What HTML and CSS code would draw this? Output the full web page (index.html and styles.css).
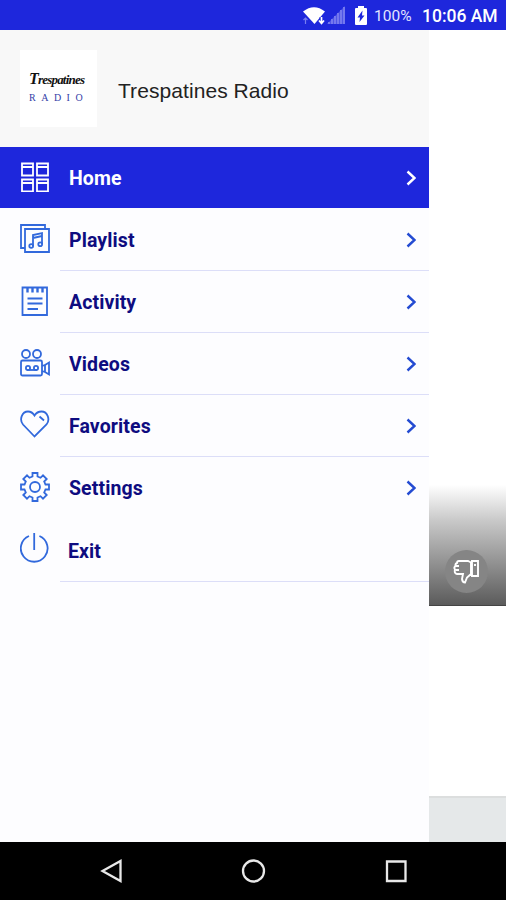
FILE: index.html
```html
<!DOCTYPE html>
<html lang="en">
<head>
<meta charset="utf-8">
<title>Trespatines Radio</title>
<link rel="stylesheet" href="styles.css">
</head>
<body>
<div class="phone">
  <header class="status">
    <svg class="wifi" width="24" height="20" viewBox="0 0 24 20"><path d="M0 5.500Q11 -3 22 5.500L11.500 18Z" fill="#fff"/><path d="M18.500 11v7M16 15l2.500 3 2.500-3" fill="none" stroke="#1e27dc" stroke-width="4"/><path d="M18.500 11v6M16 14.500l2.500 3 2.500-3" fill="none" stroke="#fff" stroke-width="1.700"/><path d="M2.500 18v-6M.5 14l2-2 2 2" fill="none" stroke="#777df0" stroke-width="1.200"/></svg>
    <svg class="signal" width="19" height="18" viewBox="0 0 19 18"><path d="M0 18L18 0v18z" fill="#4f55e6"/><path d="M1 18v-2h2v2zM4 18v-5h2v5zM7 18v-8h2v8zM10 18V7h2v11zM13 18V4h2v14zM16 18V1h2v17z" fill="#7478ee"/></svg>
    <svg class="battery" width="12" height="19" viewBox="0 0 12 19"><path d="M3 0h6v2h2q1 0 1 1v15q0 1-1 1H1q-1 0-1-1V3q0-1 1-1h2z" fill="#fff"/><path d="M7.500 4.500L2.500 11.500H5L4.500 16 9.500 9.500H7z" fill="#1e27dc"/></svg>
    <span class="percent">100%</span>
    <span class="time">10:06 AM</span>
  </header>
  <main class="content">
    <nav class="drawer">
      <div class="profile">
        <div class="logo"><span class="script"><span class="initial">T</span>respatines</span><span class="radio">RADIO</span></div>
        <h1 class="name">Trespatines Radio</h1>
      </div>
      <div class="item active">
        <svg class="icon" viewBox="0 0 30 30"><path d="M2 1.500h11v12H2zM17 1.500h11v12H17zM2 17.500h11v12H2zM17 17.500h11v12H17zM2 5h11M17 5h11M2 21h11M17 21h11"/></svg>
        <div class="row"><span>Home</span><svg class="chevron" viewBox="0 0 10 16"><path d="M1.500 1.500L8.500 8l-7 6.500"/></svg></div>
      </div>
      <div class="item">
        <svg class="icon" viewBox="0 0 30 30"><path d="M5 5h24v23H5zM5 24H1V1h24v4"/><path d="M13 22V11l9-2v11M13 14l9-2"/><circle cx="11.200" cy="22" r="1.900"/><circle cx="20.200" cy="20.200" r="1.900"/></svg>
        <div class="row"><span>Playlist</span><svg class="chevron" viewBox="0 0 10 16"><path d="M1.500 1.500L8.500 8l-7 6.500"/></svg></div>
      </div>
      <div class="item">
        <svg class="icon" viewBox="0 0 30 30"><path d="M2.500 1.500h24.500v27.500H2.500zM7.500 12.500h15M7.500 17.500h15M7.500 23h10.500"/><path d="M7.500 1v5.500M12.500 1v5.500M17.500 1v5.500M22.500 1v5.500" stroke-width="2.400"/></svg>
        <div class="row"><span>Activity</span><svg class="chevron" viewBox="0 0 10 16"><path d="M1.500 1.500L8.500 8l-7 6.500"/></svg></div>
      </div>
      <div class="item">
        <svg class="icon" viewBox="0 0 30 30"><circle cx="6" cy="6" r="4"/><circle cx="17" cy="6" r="4"/><rect x="1" y="12.500" width="21" height="15" rx="1.500"/><path d="M22 18l3-1v7l-3-1M25 17l4-2.500v12L25 24"/><circle cx="8" cy="20" r="2.100"/><circle cx="16" cy="20" r="2.100"/><path d="M7 22h10"/></svg>
        <div class="row"><span>Videos</span><svg class="chevron" viewBox="0 0 10 16"><path d="M1.500 1.500L8.500 8l-7 6.500"/></svg></div>
      </div>
      <div class="item">
        <svg class="icon" viewBox="0 0 30 30"><path d="M14.500 26.500L3 14.500C-1 9.500 2 1.500 8 1.500q4 0 6.500 4Q17 1.500 21.500 1.500c6 0 9 8 5 13zM19.500 6.500l4.500 4"/></svg>
        <div class="row"><span>Favorites</span><svg class="chevron" viewBox="0 0 10 16"><path d="M1.500 1.500L8.500 8l-7 6.500"/></svg></div>
      </div>
      <div class="item plain">
        <svg class="icon" viewBox="0 0 30 30"><path d="M12.500 1h5v3.500l3 1.300L23 3.300 26.700 7l-2.500 2.500 1.300 3H29v5h-3.500l-1.300 3 2.500 2.500L23 26.700l-2.500-2.500-3 1.300V29h-5v-3.500l-3-1.300L7 26.700 3.300 23l2.500-2.500-1.300-3H1v-5h3.500l1.300-3L3.300 7 7 3.300l2.500 2.500 3-1.300z"/><circle cx="15" cy="15" r="5"/></svg>
        <div class="row"><span>Settings</span><svg class="chevron" viewBox="0 0 10 16"><path d="M1.500 1.500L8.500 8l-7 6.500"/></svg></div>
      </div>
      <div class="item last">
        <svg class="icon" viewBox="0 0 30 30"><path d="M9 3A13.400 13.400 0 1 0 19.400 3M14.200 0v17"/></svg>
        <div class="row"><span>Exit</span></div>
      </div>
    </nav>
    <section class="player">
      <div class="art">
        <div class="dislike"><svg width="27" height="27" viewBox="0 0 27 27"><path d="M19 3h6v15h-6zM18 4.500L15 3H6Q4 3 4 5q-2 .5-1.500 3-2 1.500-.5 3.500-1 4 2 4.500h6l-1 5q.5 3.500 3 3.500l2-5 4-3.500z"/><path d="M2.500 8H6M2.500 12H6M22 6v2"/></svg></div>
      </div>
      <div class="footer"></div>
    </section>
  </main>
  <footer class="navbar">
    <svg width="506" height="58" viewBox="0 0 506 58"><path d="M102.500 29L120.500 19v20z"/><circle cx="253.500" cy="29" r="10.500"/><path d="M387 19.500h18.500V39H387z"/></svg>
  </footer>
</div>
</body>
</html>
```

FILE: styles.css
```css
* { box-sizing: border-box; }
body { margin: 0; background: #fff; font-family: Roboto, sans-serif; }
.phone { width: 506px; height: 900px; display: flex; flex-direction: column; overflow: hidden; }
svg { display: block; flex: none; }
.status { height: 30px; flex: none; background: #1e27dc; color: #fff; display: flex; align-items: flex-start; padding: 6px 0 0 303px; white-space: nowrap; }
.battery { margin-left: 9px; }
.percent { width: 48px; margin-left: 7px; font-size: 15.500px; line-height: 20px; color: #e3e4ff; }
.time { font-size: 17.500px; line-height: 20px; font-weight: 500; }
.content { height: 812px; flex: none; display: flex; }
.drawer { width: 429px; flex: none; background: #fdfdff; color: #0e0c80; }
.profile { height: 117px; background: #f8f8f8; display: flex; align-items: center; padding: 0 0 0 20px; gap: 21px; }
.logo { width: 77px; height: 77px; background: #fff; display: flex; flex-direction: column; padding: 20px 0 0 9px; font-family: "Liberation Serif", serif; }
.script { font-size: 13px; line-height: 20px; font-style: italic; font-weight: 700; letter-spacing: -.8px; color: #111; }
.initial { font-size: 16px; line-height: 1; }
.radio { font-size: 10px; line-height: 16px; letter-spacing: 5.500px; color: #3440a8; }
.name { margin: 5px 0 0; font: 400 21px/28px "Liberation Sans", sans-serif; color: #222; letter-spacing: .07px; }
.item { height: 62.100px; display: flex; padding-left: 20px; }
.icon { width: 30px; height: 30px; margin: 15px 10px 0 0; }
.icon, .chevron { fill: none; stroke: #3269dc; stroke-width: 1.800; }
.row { flex: 1; display: flex; align-items: center; padding: 2px 13px 0 9px; border-bottom: 1.500px solid #dcdef8; font-size: 19.500px; font-weight: 700; letter-spacing: .1px; }
.chevron { width: 10px; height: 16px; margin: -2px 0 0 auto; stroke-width: 2.400; stroke: #244bd2; }
.active { background: #1e27dc; color: #fff; height: 61px; margin-bottom: 1px; }
.active .row { padding-top: 3px; }
.active .icon, .active .chevron { stroke: #fff; }
.active .row, .plain .row { border-color: transparent; }
.last .icon { margin-top: 14px; }
.last .row { padding-left: 8px; }
.player { flex: 1; display: flex; flex-direction: column; background: #fff; }
.art { height: 121px; margin-top: 455px; background: linear-gradient(#fff, #c8c8c8 30%, #5b5b5b); display: flex; justify-content: center; align-items: flex-end; padding: 0 3px 12px 0; border-bottom: 1px solid #444; }
.dislike { width: 43px; height: 43px; border-radius: 50%; background: #858585; display: flex; align-items: center; justify-content: center; }
.dislike svg { fill: none; stroke: #fff; stroke-width: 1.900; }
.footer { height: 46px; margin-top: auto; background: #e5e8e9; border-top: 2px solid #dcdede; }
.navbar { height: 58px; background: #000; }
.navbar svg { fill: none; stroke: #e8e8e8; stroke-width: 2.300; }
```
